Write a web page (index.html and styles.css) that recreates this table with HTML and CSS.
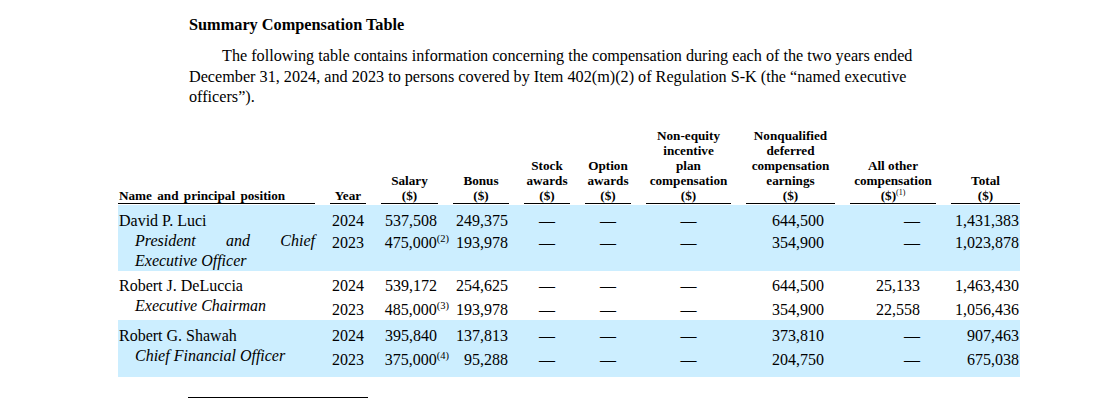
FILE: index.html
```html
<!DOCTYPE html>
<html>
<head>
<meta charset="utf-8">
<link rel="stylesheet" href="styles.css">
</head>
<body>
<div class="page">
  <h2 class="title">Summary Compensation Table</h2>
  <p class="intro">The following table contains information concerning the compensation during each of the two years ended<br>December 31, 2024, and 2023 to persons covered by Item 402(m)(2) of Regulation S-K (the “named executive<br>officers”).</p>

  <div class="table">
    <div class="grid head">
      <div class="h name">Name and principal position</div>
      <div class="h">Year</div>
      <div class="h">Salary<br>($)</div>
      <div class="h">Bonus<br>($)</div>
      <div class="h">Stock<br>awards<br>($)</div>
      <div class="h">Option<br>awards<br>($)</div>
      <div class="h">Non-equity<br>incentive<br>plan<br>compensation<br>($)</div>
      <div class="h">Nonqualified<br>deferred<br>compensation<br>earnings<br>($)</div>
      <div class="h">All other<br>compensation<br>($)<sup class="hfn">(1)</sup></div>
      <div class="h">Total<br>($)</div>
    </div>

    <div class="grid person blue p1">
      <div class="namecell">
        <div class="nm">David P. Luci</div>
        <div class="ttl just"><span>President</span><span>and</span><span>Chief</span></div>
        <div class="ttl">Executive Officer</div>
      </div>
      <div class="d c">2024</div>
      <div class="d r">537,508</div>
      <div class="d r">249,375</div>
      <div class="d c">—</div>
      <div class="d c">—</div>
      <div class="d c">—</div>
      <div class="d nq">644,500</div>
      <div class="d ao">—</div>
      <div class="d tot">1,431,383</div>
      <div class="d c">2023</div>
      <div class="d r">475,000<sup class="fn">(2)</sup></div>
      <div class="d r">193,978</div>
      <div class="d c">—</div>
      <div class="d c">—</div>
      <div class="d c">—</div>
      <div class="d nq">354,900</div>
      <div class="d ao">—</div>
      <div class="d tot">1,023,878</div>
    </div>

    <div class="grid person p2">
      <div class="namecell">
        <div class="nm">Robert J. DeLuccia</div>
        <div class="ttl">Executive Chairman</div>
      </div>
      <div class="d c">2024</div>
      <div class="d r">539,172</div>
      <div class="d r">254,625</div>
      <div class="d c">—</div>
      <div class="d c">—</div>
      <div class="d c">—</div>
      <div class="d nq">644,500</div>
      <div class="d ao">25,133</div>
      <div class="d tot">1,463,430</div>
      <div class="d c">2023</div>
      <div class="d r">485,000<sup class="fn">(3)</sup></div>
      <div class="d r">193,978</div>
      <div class="d c">—</div>
      <div class="d c">—</div>
      <div class="d c">—</div>
      <div class="d nq">354,900</div>
      <div class="d ao">22,558</div>
      <div class="d tot">1,056,436</div>
    </div>

    <div class="grid person blue p3">
      <div class="namecell">
        <div class="nm">Robert G. Shawah</div>
        <div class="ttl">Chief Financial Officer</div>
      </div>
      <div class="d c">2024</div>
      <div class="d r">395,840</div>
      <div class="d r">137,813</div>
      <div class="d c">—</div>
      <div class="d c">—</div>
      <div class="d c">—</div>
      <div class="d nq">373,810</div>
      <div class="d ao">—</div>
      <div class="d tot">907,463</div>
      <div class="d c">2023</div>
      <div class="d r">375,000<sup class="fn">(4)</sup></div>
      <div class="d r">95,288</div>
      <div class="d c">—</div>
      <div class="d c">—</div>
      <div class="d c">—</div>
      <div class="d nq">204,750</div>
      <div class="d ao">—</div>
      <div class="d tot">675,038</div>
    </div>
  </div>

  <div class="rule"></div>
</div>
</body>
</html>
```

FILE: styles.css
```css
html, body {
  margin: 0;
  padding: 0;
  background: #ffffff;
}

body {
  font-family: "Liberation Serif", "Times New Roman", serif;
  color: #000000;
}

.page {
  padding: 15px 0 0 118px;
  width: 902px;
}

.title {
  margin: 0 0 0 71px;
  font-size: 16.3px;
  line-height: 20px;
  font-weight: bold;
}

.intro {
  margin: 11px 0 0 71px;
  font-size: 16.2px;
  line-height: 20.5px;
  text-indent: 33px;
  white-space: nowrap;
}

.table {
  margin-top: 20.5px;
  width: 902px;
}

.grid {
  display: grid;
  grid-template-columns: 197px 36px 57px 56px 46px 46px 85px 89px 86px 69px;
  column-gap: 15px;
}

.head {
  align-items: end;
  padding-bottom: 1px;
}

.h {
  font-size: 13.2px;
  line-height: 15px;
  font-weight: bold;
  text-align: center;
  border-bottom: 1px solid #000000;
  white-space: nowrap;
}

.h.name {
  text-align: left;
  padding-left: 1px;
  word-spacing: 2px;
}

.hfn {
  font-size: 8px;
  line-height: 0;
  vertical-align: 5px;
  font-weight: normal;
}

.blue {
  background: #cceeff;
}

.person {
  grid-template-rows: 22px 22px auto;
}

.p1 {
  padding-top: 5px;
}

.p2 {
  padding-top: 4px;
  grid-template-rows: 24px 21px auto;
}

.p3 {
  padding-top: 5px;
  padding-bottom: 6px;
  grid-template-rows: 24px 22px auto;
}

.namecell {
  grid-row: 1 / span 3;
  grid-column: 1;
  padding-left: 1px;
}

.nm {
  font-size: 16px;
  line-height: 21px;
}

.ttl {
  font-size: 16px;
  line-height: 20px;
  font-style: italic;
  padding-left: 16px;
}

.just {
  display: flex;
  justify-content: space-between;
}

.d {
  font-size: 16px;
  line-height: 22px;
  white-space: nowrap;
}

.c {
  text-align: center;
}

.r {
  text-align: right;
  padding-right: 1px;
}

.nq {
  text-align: right;
  padding-right: 11px;
}

.ao {
  text-align: right;
  padding-right: 16px;
}

.tot {
  text-align: right;
  padding-right: 1px;
}

.fn {
  font-size: 10.5px;
  line-height: 0;
  vertical-align: 6px;
  margin-right: -12px;
}

.rule {
  margin: 20px 0 0 70px;
  width: 180px;
  border-top: 1px solid #000000;
}
```
